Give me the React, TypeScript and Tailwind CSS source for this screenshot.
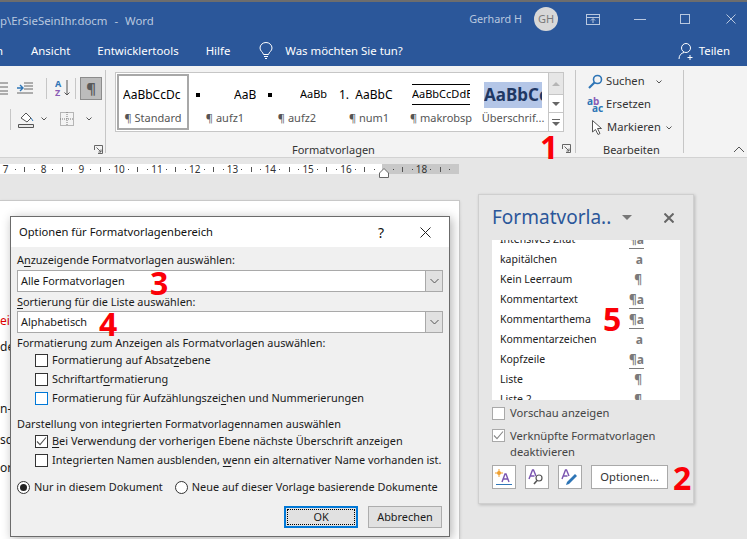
import React from "react";

const F = "[font-family:'Noto_Sans',sans-serif]";

function U({ c }: { c: string }) {
  return <span className="underline underline-offset-2">{c}</span>;
}

function Tab({ children, className = "" }: { children: React.ReactNode; className?: string }) {
  return <span className={"text-[11.4px] text-white whitespace-nowrap " + className}>{children}</span>;
}

function GalleryItem({ sample, label, selected }: { sample: React.ReactNode; label: string; selected?: boolean }) {
  return (
    <div className={"w-[72px] h-full shrink-0 flex flex-col items-center " + (selected ? "border-[2px] border-[#a8a8a8] p-[3px]" : "p-[5px]")}>
      <div className="h-[38px] w-[62px] flex items-center justify-center overflow-hidden whitespace-nowrap">{sample}</div>
      <div className="text-[11px] text-[#555] whitespace-nowrap leading-[14px] mt-[1px]">{label}</div>
    </div>
  );
}

function Check({ checked, blue, label }: { checked?: boolean; blue?: boolean; label: React.ReactNode }) {
  return (
    <div className="h-[19px] flex items-center gap-[4px] whitespace-nowrap">
      <div className={"w-[13px] h-[13px] border flex items-center justify-center bg-white shrink-0 " + (blue ? "border-[#0078d7]" : "border-[#333]")}>
        {checked && (
          <svg width="11" height="11" viewBox="0 0 11 11" fill="none" stroke="#555" strokeWidth="1.1">
            <path d="M1 5.5 L4 8.7 L10 1.5" />
          </svg>
        )}
      </div>
      <span>{label}</span>
    </div>
  );
}

function Radio({ on, label }: { on?: boolean; label: string }) {
  return (
    <div className="flex items-center gap-[4px] whitespace-nowrap">
      <div className="w-[13px] h-[13px] rounded-full border border-[#333] bg-white flex items-center justify-center">
        {on && <div className="w-[7px] h-[7px] rounded-full bg-[#222]" />}
      </div>
      <span>{label}</span>
    </div>
  );
}

function Combo({ value }: { value: string }) {
  return (
    <div className="h-[22px] border-[1px] border-[#a9a9a9] bg-white flex items-center pl-[3px] w-[426px]">
      <span className="flex-1">{value}</span>
      <div className="w-[17px] h-full bg-[#e1e1e1] border-l-[1px] border-[#a9a9a9] flex items-center justify-center">
        <svg width="9" height="6" viewBox="0 0 9 6" fill="none" stroke="#555"><path d="M0.5 1 L4.5 5 L8.5 1" /></svg>
      </div>
    </div>
  );
}

function StyleRow({ name, kind, first }: { name: string; kind: "a" | "p" | "pa"; first?: boolean }) {
  return (
    <div className={"h-[20px] shrink-0 flex items-center pl-[8px] whitespace-nowrap text-[10.5px] " + (first ? "-mt-[10px]" : "")}>
      <span className="w-[120px] text-[#222]">{name}</span>
      <span className="w-[24px] text-right font-bold text-[#7a7a7a] text-[12px] leading-none">
        {kind === "a" ? <span className="pr-[1px]">a</span> : kind === "p" ? <span className="pr-[2px]">¶</span> : <span className="border-b-[1.5px] border-[#7a7a7a]">¶a</span>}
      </span>
    </div>
  );
}

function Tick({ n }: { n?: number }) {
  const cell = "w-[9.45px] shrink-0 flex items-center justify-center";
  return (
    <div className="w-[37.8px] shrink-0 flex items-center">
      <div className={cell + " text-[10px] text-[#333] leading-none whitespace-nowrap"}>{n}</div>
      <div className={cell}><div className="w-[1px] h-[1px] bg-[#444]" /></div>
      <div className={cell}><div className="w-[1px] h-[5px] bg-[#555]" /></div>
      <div className={cell}><div className="w-[1px] h-[1px] bg-[#444]" /></div>
    </div>
  );
}

function Mini({ children }: { children: React.ReactNode }) {
  return <div className="w-[24px] h-[24px] bg-white border border-[#a9a9a9] flex items-center justify-center">{children}</div>;
}

function Red({ children, className }: { children: React.ReactNode; className: string }) {
  return <div className={"absolute text-[#fb0007] font-bold text-[32px] leading-none [font-family:'Open_Sans',sans-serif] " + className}>{children}</div>;
}

function Launcher({ className }: { className: string }) {
  return (
    <svg className={className} width="9" height="9" viewBox="0 0 9 9" fill="none" stroke="#666">
      <path d="M0.500 5V0.500H8.500V8.500H4M2.500 2.500L7 7M7 4.500V7H4.500" />
    </svg>
  );
}

export default function App() {
  return (
    <div className={"relative w-[747px] h-[539px] overflow-hidden bg-[#e6e6e6] text-[10.9px] text-[#1a1a1a] " + F}>
      {/* Title bar */}
      <div className="h-[2px] bg-[#6d6d6d]" />
      <div className="h-[34px] bg-[#2b579a] flex items-center text-[#b9c8df] text-[11.4px]">
        <span className="whitespace-nowrap mt-[3px]">p\ErSieSeinIhr.docm</span>
        <span className="ml-[7px] mt-[3px]">-</span>
        <span className="ml-[7px] mt-[3px]">Word</span>
        <span className="ml-auto whitespace-nowrap text-[10.8px]">Gerhard H</span>
        <div className="ml-[12px] w-[24px] h-[24px] rounded-full bg-[#d8d8d8] text-[#7a7a7a] text-[11px] flex items-center justify-center">GH</div>
        <svg className="ml-[28px]" width="14" height="11" viewBox="0 0 14 11" fill="none" stroke="#b9c8df"><rect x="0.5" y="0.5" width="13" height="10" /><path d="M0.5 3.5H13.5M7 9V5M5 6.5L7 4.5L9 6.5" /></svg>
        <div className="ml-[34px] w-[12px] h-[1px] bg-[#b9c8df]" />
        <div className="ml-[34px] w-[10px] h-[10px] border border-[#b9c8df]" />
        <svg className="ml-[36px] mr-[11px]" width="10" height="10" viewBox="0 0 10 10" stroke="#b9c8df"><path d="M0.5 0.5L9.5 9.5M9.5 0.5L0.5 9.5" /></svg>
      </div>
      {/* Tabs */}
      <div className="h-[30px] bg-[#2b579a] flex items-center">
        <Tab className="w-[31px] -ml-[4px] mr-[4px]">n</Tab>
        <Tab>Ansicht</Tab>
        <Tab className="ml-[27px]">Entwicklertools</Tab>
        <Tab className="ml-[27px]">Hilfe</Tab>
        <svg className="ml-[29px]" width="14" height="18" viewBox="0 0 14 18" fill="none" stroke="#fff"><path d="M4.5 12.5C4 10 1 9 1 6a6 5.5 0 0 1 12 0c0 3-3 4-3.500 6.500zM5 14.500h4M6 16.500h2" /></svg>
        <Tab className="ml-[12px] text-[11.2px]">Was möchten Sie tun?</Tab>
        <div className="ml-auto flex items-center mr-[17px]">
          <svg width="18" height="18" viewBox="0 0 18 18" fill="none" stroke="#fff"><circle cx="8" cy="6" r="4.500" /><path d="M1 17c0-4 2.500-6 5-6.500M12 13v5M9.500 15.500h5" /></svg>
          <Tab className="ml-[3px]">Teilen</Tab>
        </div>
      </div>
      {/* Ribbon */}
      <div className="h-[92px] bg-[#f3f3f3] border-b border-[#d2d2d2] flex pt-[4px] pb-[4px]">
        <div className="w-[106px] shrink-0 border-r border-[#c6c6c6] relative flex flex-col pt-[5px]">
          <div className="flex items-center h-[26px]">
            <svg width="40" height="14" viewBox="0 0 40 14" fill="none" stroke="#666"><path d="M0 2h8M0 6h8M0 10h8M0 13h8" /><path d="M24 2h9M24 5h9M24 8h9M17 12h16" /><path d="M17 7h6M20 4l3 3-3 3" stroke="#2e75b6" strokeWidth="1.400" /></svg>
            <div className="ml-[6px] w-[1px] h-[21px] bg-[#c6c6c6]" />
            <svg className="ml-[8px]" width="16" height="18" viewBox="0 0 16 18" fill="none"><text x="0" y="8" fontSize="9" fill="#2e75b6" fontWeight="bold">A</text><text x="0" y="17" fontSize="9" fill="#8a5cb5" fontWeight="bold">Z</text><path d="M12 1v15M9.500 13.500L12 16l2.500-2.500" stroke="#555" /></svg>
            <div className="ml-[4px] w-[1px] h-[21px] bg-[#c6c6c6]" />
            <div className="ml-[4px] w-[22px] h-[23px] bg-[#bcbcbc] border border-[#8c8c8c] flex items-center justify-center text-[15px] text-[#5a5a5a] font-bold">¶</div>
          </div>
          <div className="flex items-center h-[24px] mt-[6px] pl-[10px]">
            <div className="w-[1px] h-[21px] bg-[#c6c6c6]" />
            <svg className="ml-[7px]" width="16" height="17" viewBox="0 0 16 17" fill="none" stroke="#555"><path d="M3 7L8 2l5 5-4 4z" fill="#fff" /><path d="M13 7l2 3" stroke="#2e75b6" /><path d="M0.500 13.500h15v3h-15z" fill="#e8e8e8" /></svg>
            <svg className="ml-[7px]" width="6" height="4" viewBox="0 0 6 4" fill="none" stroke="#555"><path d="M0.500 0.500L3 3l2.500-2.500" /></svg>
            <svg className="ml-[13px]" width="14" height="14" viewBox="0 0 14 14" fill="none" stroke="#777" strokeDasharray="1 1"><rect x="0.500" y="0.500" width="13" height="13" /><path d="M7 0v14M0 7h14" /></svg>
            <svg className="ml-[12px]" width="6" height="4" viewBox="0 0 6 4" fill="none" stroke="#555"><path d="M0.500 0.500L3 3l2.500-2.500" /></svg>
          </div>
          <Launcher className="absolute right-[2px] -bottom-[1px]" />
        </div>
        <div className="w-[470px] shrink-0 border-r border-[#c6c6c6] relative pl-[9px] pt-[2px]">
          <div className="w-[449px] h-[60px] border border-[#c6c6c6] bg-white flex">
            <div className="flex w-[432px] overflow-hidden pl-[1px] pt-[1px] pb-[1px]">
              <GalleryItem selected label="¶ Standard" sample={<span className="text-[12px] text-black w-[60px] overflow-hidden">AaBbCcDc</span>} />
              <GalleryItem label="¶ aufz1" sample={<div className="w-full flex items-center justify-between text-[12px] text-black"><div className="w-[4px] h-[4px] bg-black ml-[2px]" /><span className="w-[22px] overflow-hidden">AaB</span></div>} />
              <GalleryItem label="¶ aufz2" sample={<div className="w-full flex items-center justify-between text-[11px] text-black"><div className="w-[4px] h-[4px] bg-black ml-[2px]" /><span className="w-[28px] overflow-hidden">AaBb</span></div>} />
              <GalleryItem label="¶ num1" sample={<span className="text-[12px] text-black w-[60px] overflow-hidden">1.&nbsp; AaBbC</span>} />
              <GalleryItem label="¶ makrobsp" sample={<div className="w-[58px] overflow-hidden border-y border-black text-[11px] text-black py-[1px] text-center">AaBbCcDdE</div>} />
              <GalleryItem label="Überschrif..." sample={<div className="w-[58px] h-[26px] bg-[#b4c6e7] overflow-hidden text-[17px] font-bold text-[#1f3864] leading-[26px]">AaBbCc</div>} />
            </div>
            <div className="flex-1 flex flex-col border-l border-[#c6c6c6]">
              <div className="h-[21px] bg-[#e6e6e6] flex items-center justify-center"><div className="w-0 h-0 border-x-[4px] border-x-transparent border-b-[4px] border-b-[#b5b5b5]" /></div>
              <div className="h-[19px] border-y border-[#c6c6c6] flex items-center justify-center"><div className="w-0 h-0 border-x-[4px] border-x-transparent border-t-[4px] border-t-[#666]" /></div>
              <div className="flex-1 flex flex-col items-center justify-center gap-[2px]"><div className="w-[8px] h-[1px] bg-[#666]" /><div className="w-0 h-0 border-x-[4px] border-x-transparent border-t-[4px] border-t-[#666]" /></div>
            </div>
          </div>
          <div className="absolute left-[186px] -bottom-[4px] text-[#333] leading-[14px] text-[11px] whitespace-nowrap">Formatvorlagen</div>
          <Launcher className="absolute right-[4px] -bottom-[0px]" />
        </div>
        <div className="w-[108px] shrink-0 border-r border-[#c6c6c6] relative pl-[12px] text-[11.2px] text-[#333]">
          <div className="h-[23px] flex items-center gap-[3px]">
            <svg width="15" height="15" viewBox="0 0 15 15" fill="none"><circle cx="9.500" cy="5.500" r="4" stroke="#2e75b6" strokeWidth="1.600" /><path d="M6.500 8.500L1 14" stroke="#2e75b6" strokeWidth="2.200" /></svg>
            <span>Suchen</span>
            <svg className="ml-[8px]" width="6" height="4" viewBox="0 0 6 4" fill="none" stroke="#555"><path d="M0.500 0.500L3 3l2.500-2.500" /></svg>
          </div>
          <div className="h-[23px] flex items-center gap-[2px] -ml-[1px]">
            <svg width="17" height="16" viewBox="0 0 17 16" fontSize="10" fontWeight="bold"><text x="0" y="8" fill="#2e75b6">a</text><text x="6" y="8" fill="#8a5cb5">b</text><text x="5" y="15" fill="#2e75b6">ac</text></svg>
            <span>Ersetzen</span>
          </div>
          <div className="h-[23px] flex items-center gap-[5px] pl-[4px]">
            <svg width="10" height="15" viewBox="0 0 10 15" fill="#fff" stroke="#555"><path d="M0.500 0.500V12L3.500 9.500L6 14.500L8 13.500L5.500 8.500H9.500Z" /></svg>
            <span>Markieren</span>
            <svg width="6" height="4" viewBox="0 0 6 4" fill="none" stroke="#555"><path d="M0.500 0.500L3 3l2.500-2.500" /></svg>
          </div>
          <div className="absolute left-[27px] -bottom-[4px] leading-[14px] text-[11px] whitespace-nowrap">Bearbeiten</div>
        </div>
        <div className="flex-1 flex items-end justify-end pr-[2px]">
          <svg width="12" height="7" viewBox="0 0 12 7" fill="none" stroke="#555"><path d="M1 6L6 1L11 6" /></svg>
        </div>
      </div>
      {/* Ruler */}
      <div className="h-[20px] pt-[6px]">
        <div className="w-[459px] h-[10px] relative overflow-visible flex pl-[1px] bg-[linear-gradient(to_right,#ffffff_382px,#c8c8c8_382px)]">
          {[7, 8, 9, 10, 11, 12, 13, 14, 15, 16, undefined, 18].map((n, i) => <Tick key={i} n={n} />)}
          <svg className="absolute left-[379px] top-[4px]" width="10" height="10" viewBox="0 0 10 10" fill="#fff" stroke="#666"><path d="M0.500 9.500V5L5 0.500L9.500 5V9.500Z" /></svg>
        </div>
      </div>
      {/* Document page */}
      <div className="mt-[22px] w-[460px] h-[400px] bg-white border-r border-t border-[#c8c8c8] shadow-sm" />

      {/* Text peeking out of the page */}
      <div className="absolute left-0 top-[312px] text-[12px] text-[#e00000]">ein</div>
      <div className="absolute left-0 top-[338px] text-[12px]">de</div>
      <div className="absolute left-0 top-[400px] text-[12px]">n-"</div>
      <div className="absolute left-0 top-[431px] text-[12px]">sc</div>
      <div className="absolute left-0 top-[459px] text-[12px]">or</div>

      {/* Dialog */}
      <div className="absolute left-[10px] top-[216px] w-[440px] h-[321px] bg-[#f0f0f0] border border-[#6b6b6b] shadow-[2px_2px_10px_rgba(0,0,0,0.3)]">
        <div className="h-[30px] bg-white flex items-center pl-[8px] text-[11.2px] text-[#111]">
          <span className="flex-1">Optionen für Formatvorlagenbereich</span>
          <span className="text-[14px] mr-[36px]">?</span>
          <svg className="mr-[18px]" width="11" height="11" viewBox="0 0 11 11" stroke="#222"><path d="M0.500 0.500L10.500 10.500M10.500 0.500L0.500 10.500" /></svg>
        </div>
        <div className="pl-[6px] pr-[7px]">
          <div className="h-[23px] pt-[5px] leading-[16px]">A<U c="n" />zuzeigende Formatvorlagen auswählen:</div>
          <Combo value="Alle Formatvorlagen" />
          <div className="h-[19px] pt-[2px] leading-[16px]"><U c="S" />ortierung für die Liste auswählen:</div>
          <Combo value="Alphabetisch" />
          <div className="h-[18px] pt-[2px] leading-[16px]">Formatierung zum Anzeigen als Formatvorlagen auswählen:</div>
          <div className="pl-[18px]">
            <Check label={<>Formatierung auf Absat<U c="z" />ebene</>} />
            <Check label={<>Schriftartf<U c="o" />rmatierung</>} />
            <Check blue label={<>Formatierung für Aufzählungszei<U c="c" />hen und Nummerierungen</>} />
          </div>
          <div className="h-[24px] pt-[7px] leading-[17px]">Darstellung von integrierten Formatvorlagennamen auswählen</div>
          <div className="pl-[18px]">
            <Check checked label={<><U c="B" />ei Verwendung der vorherigen Ebene nächste Überschrift anzeigen</>} />
            <Check label={<>Integrierten Namen ausblenden, <U c="w" />enn ein alternativer Name vorhanden ist.</>} />
          </div>
          <div className="flex mt-[9px] gap-[12px]">
            <Radio on label="Nur in diesem Dokument" />
            <Radio label="Neue auf dieser Vorlage basierende Dokumente" />
          </div>
          <div className="flex justify-end gap-[10px] mt-[11px] pr-[0px]">
            <div className="w-[74px] h-[22px] bg-[#e1e1e1] border-[2px] border-[#0078d7] flex items-center justify-center p-[1px]">
              <div className="w-full h-full border border-dotted border-black flex items-center justify-center">OK</div>
            </div>
            <div className="w-[74px] h-[22px] bg-[#e1e1e1] border border-[#adadad] flex items-center justify-center">Abbrechen</div>
          </div>
        </div>
      </div>

      {/* Task pane */}
      <div className="absolute left-[478px] top-[194px] w-[216px] h-[310px] bg-[#e6e6e6] border border-[#cfcfcf] shadow-[1px_1px_3px_rgba(0,0,0,0.2)] pl-[13px]">
        <div className="h-[45px] flex items-center">
          <span className="text-[19px] text-[#2b579a] whitespace-nowrap">Formatvorla..</span>
          <div className="ml-[11px] w-0 h-0 border-x-[5px] border-x-transparent border-t-[5px] border-t-[#777]" />
          <svg className="ml-[32px]" width="10" height="10" viewBox="0 0 10 10" stroke="#666" strokeWidth="2"><path d="M0.500 0.500L9.500 9.500M9.500 0.500L0.500 9.500" /></svg>
        </div>
        <div className="w-[188px] h-[160px] bg-white overflow-hidden flex flex-col">
          <StyleRow first name="Intensives Zitat" kind="pa" />
          <StyleRow name="kapitälchen" kind="a" />
          <StyleRow name="Kein Leerraum" kind="p" />
          <StyleRow name="Kommentartext" kind="pa" />
          <StyleRow name="Kommentarthema" kind="pa" />
          <StyleRow name="Kommentarzeichen" kind="a" />
          <StyleRow name="Kopfzeile" kind="pa" />
          <StyleRow name="Liste" kind="p" />
          <StyleRow name="Liste 2" kind="p" />
        </div>
        <div className="text-[#444] text-[11.2px] mt-[5px]">
          <div className="flex items-center gap-[5px] h-[17px]">
            <div className="w-[13px] h-[13px] bg-white border border-[#a9a9a9]" />
            <span>Vorschau anzeigen</span>
          </div>
          <div className="flex gap-[5px] mt-[6px]">
            <div className="w-[13px] h-[13px] mt-[1px] bg-white border border-[#a9a9a9] flex items-center justify-center">
              <svg width="11" height="11" viewBox="0 0 11 11" fill="none" stroke="#888" strokeWidth="1.100"><path d="M1 5.500 L4 8.700 L10 1.500" /></svg>
            </div>
            <span className="leading-[16px] w-[160px]">Verknüpfte Formatvorlagen deaktivieren</span>
          </div>
          <div className="flex items-center mt-[5px]">
            <Mini><svg width="18" height="17" viewBox="0 0 18 17" fill="none"><circle cx="4" cy="4" r="2" fill="#f0a030" /><path d="M4 0v8M0 4h8" stroke="#f0a030" /><path d="M7 13L10 5h1l3 8M8 10h5" stroke="#7a55b0" strokeWidth="1.400" /><path d="M1 15.500h16" stroke="#2e75b6" /></svg></Mini>
            <div className="ml-[9px]"><Mini><svg width="18" height="17" viewBox="0 0 18 17" fill="none"><path d="M1 10L4.500 1h1L8 7M2.500 7h4" stroke="#7a55b0" strokeWidth="1.400" /><circle cx="11" cy="9" r="3" stroke="#555" strokeWidth="1.200" /><path d="M9 11.500L6 15" stroke="#555" strokeWidth="1.600" /></svg></Mini></div>
            <div className="ml-[9px]"><Mini><svg width="18" height="17" viewBox="0 0 18 17" fill="none"><path d="M1 10L4.500 1h1L8 7M2.500 7h4" stroke="#7a55b0" strokeWidth="1.400" /><path d="M14 5l2 2-8 8-3 1 1-3z" fill="#2e75b6" /></svg></Mini></div>
            <div className="ml-[9px] w-[77px] h-[24px] bg-white border border-[#a9a9a9] flex items-center justify-center text-[#333]">Optionen...</div>
          </div>
        </div>
      </div>

      <Red className="left-[540px] top-[131px]">1</Red>
      <Red className="left-[673px] top-[462px]">2</Red>
      <Red className="left-[150px] top-[267px]">3</Red>
      <Red className="left-[99px] top-[308px]">4</Red>
      <Red className="left-[603px] top-[303px]">5</Red>
    </div>
  );
}
